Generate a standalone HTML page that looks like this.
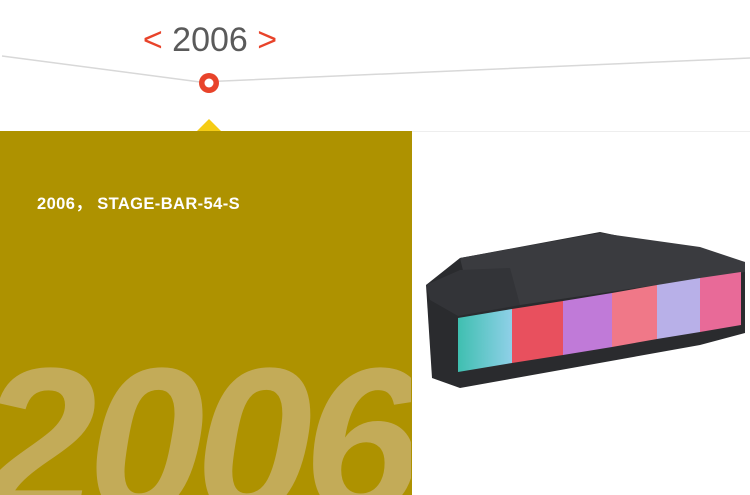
<!DOCTYPE html>
<html><head><meta charset="utf-8"><style>
html,body{margin:0;padding:0;width:750px;height:495px;overflow:hidden;}
body{position:relative;background:#fff;font-family:"Liberation Sans",sans-serif;}
.yr{position:absolute;left:0;top:20px;width:420px;text-align:center;font-size:34px;color:#5a5a5a;line-height:40px;}
.yr span{color:#e8432a;}
.left{position:absolute;left:0;top:131px;width:412px;height:364px;background:#ae9200;overflow:hidden;}
.tri{position:absolute;left:197px;top:119px;width:0;height:0;border-left:12px solid transparent;border-right:12px solid transparent;border-bottom:12px solid #f5cc14;}
.t{position:absolute;left:37px;top:59px;color:#fff;font-weight:bold;font-size:16.5px;letter-spacing:0.4px;font-family:"Liberation Sans","Noto Sans CJK SC",sans-serif;}
.big{position:absolute;left:-20px;top:206px;height:158px;overflow:hidden;font-size:210px;font-weight:bold;font-style:italic;color:#c3ab58;letter-spacing:-9px;line-height:1;white-space:nowrap;}
.hr{position:absolute;left:412px;top:131px;width:338px;height:1px;background:#eee;}
</style></head><body>
<svg style="position:absolute;left:0;top:0" width="750" height="120">
<polyline points="2,56 200,82 750,58" fill="none" stroke="#d8d8d8" stroke-width="1.5"/>
<circle cx="209" cy="83" r="10" fill="#e8432a"/>
<circle cx="209" cy="83" r="4.5" fill="#fff"/>
</svg>
<div class="yr"><span>&lt;</span> 2006 <span>&gt;</span></div>
<div class="tri"></div>
<div class="left"><div class="t">2006， STAGE-BAR-54-S</div><div class="big">2006</div></div>
<div class="hr"></div>
<svg style="position:absolute;left:0;top:0" width="750" height="495">
<defs>
<linearGradient id="g1" x1="0" x2="1"><stop offset="0" stop-color="#3fbfb0"/><stop offset="1" stop-color="#8fd0e8"/></linearGradient>
</defs>
<polygon points="426,285 460,258 600,232 745,262 745,333 700,345 460,388 432,378" fill="#2a2b2e"/>
<polygon points="460,258 600,233 700,247 745,262 745,272 520,305 470,300" fill="#3a3b3f"/>
<polygon points="426,285 460,270 510,268 520,305 458,316 430,300" fill="#333438"/>
<polygon points="458,318 512,309 512,363 458,372" fill="url(#g1)"/>
<polygon points="512,309 563,301 563,355 512,363" fill="#e8505e"/>
<polygon points="563,301 612,293 612,347 563,355" fill="#c07ad8"/>
<polygon points="612,293 657,285 657,339 612,347" fill="#f07888"/>
<polygon points="657,285 700,278 700,332 657,339" fill="#b8b0e8"/>
<polygon points="700,278 741,272 741,325 700,332" fill="#e86a98"/>
</svg>
</body></html>
